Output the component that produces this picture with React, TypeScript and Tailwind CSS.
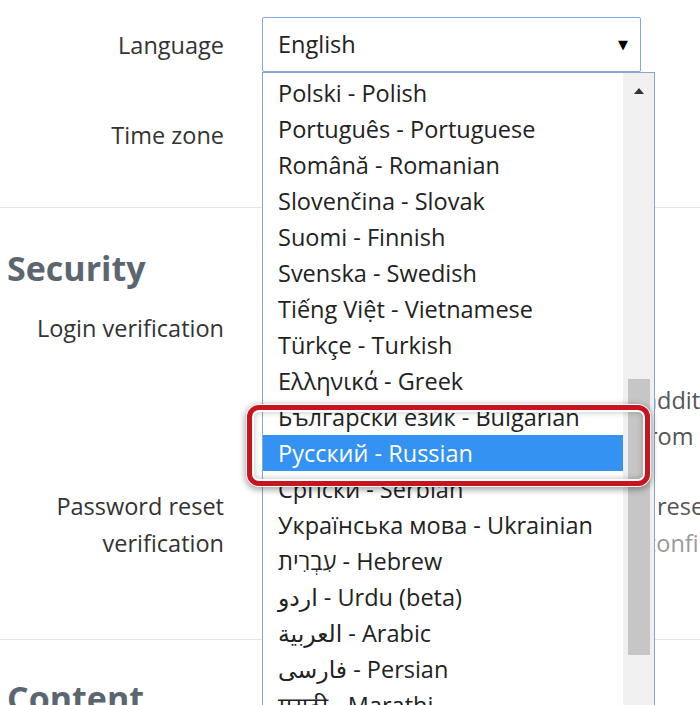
import React from 'react';

const languages = [
  'Polski - Polish',
  'Português - Portuguese',
  'Română - Romanian',
  'Slovenčina - Slovak',
  'Suomi - Finnish',
  'Svenska - Swedish',
  'Tiếng Việt - Vietnamese',
  'Türkçe - Turkish',
  'Ελληνικά - Greek',
  'Български език - Bulgarian',
  'Русский - Russian',
  'Српски - Serbian',
  'Українська мова - Ukrainian',
  'עִבְרִית - Hebrew',
  'اردو - Urdu (beta)',
  'العربية - Arabic',
  'فارسی - Persian',
  'मराठी - Marathi',
];

const font = { fontFamily: '"Open Sans", "DejaVu Sans", sans-serif' };

const Label = ({ children }: { children: React.ReactNode }) => (
  <div className="w-[224px] shrink-0 text-right text-[#333]">{children}</div>
);

export default function App() {
  return (
    <div
      className="relative w-[700px] h-[705px] overflow-hidden bg-white text-[23.5px]"
      style={font}
    >
      {/* Preferences */}
      <div className="h-[208px] border-b border-[#e6e6e6]">
        <div className="flex items-center h-[92px]">
          <Label>Language</Label>
          <div className="ml-[38px] w-[379px] h-[55px] -mt-[3px] border border-[#7fa9e0] rounded-[2px] flex items-center justify-between pl-[15px] pr-[12px] text-[#222]">
            <span>English</span>
            <span className="text-[13px] text-black">▼</span>
          </div>
        </div>
        <div className="flex items-center h-[88px]">
          <Label>Time zone</Label>
        </div>
      </div>

      {/* Security */}
      <div className="h-[432px] border-b border-[#e6e6e6] pt-[40px]">
        <h2 className="pl-[7px] h-[40px] leading-[40px] text-[34px] font-bold text-[#5c6670]">
          Security
        </h2>
        <div className="flex mt-[22px] leading-[36px]">
          <Label>Login verification</Label>
          <div className="ml-[38px] whitespace-nowrap text-[#555]">
            <div className="h-[72px]" />
            <div className="pl-[382px]">additional information</div>
            <div className="pl-[378px]">from being compromised.</div>
          </div>
        </div>
        <div className="flex mt-[34px] leading-[37px]">
          <Label>
            Password reset
            <br />
            verification
          </Label>
          <div className="ml-[38px] whitespace-nowrap">
            <div className="pl-[395px] text-[#555]">reset my password</div>
            <div className="pl-[383px] text-[#999]">confirm your identity</div>
          </div>
        </div>
      </div>

      {/* Content */}
      <div className="pt-[38px]">
        <h2 className="pl-[7px] h-[40px] leading-[40px] text-[34px] font-bold text-[#5c6670]">
          Content
        </h2>
      </div>

      {/* Open language list */}
      <div className="absolute left-[262px] top-[72px] w-[393px] h-[660px] bg-white border border-[#8fa5c4] flex">
        <div className="flex-1 pt-[2px]">
          {languages.map((l) => (
            <div
              key={l}
              className={
                l.startsWith('Русский')
                  ? 'h-[36px] leading-[36px] pl-[15px] whitespace-nowrap bg-[#3392f2] text-white'
                  : 'h-[36px] leading-[36px] pl-[15px] whitespace-nowrap text-[#222]'
              }
            >
              {l}
            </div>
          ))}
        </div>
        <div className="w-[31px] bg-[#f0f0f0] flex flex-col items-center">
          <svg width="12" height="8" viewBox="0 0 12 8" className="mt-[14px]">
            <polygon points="6,1 11,7 1,7" fill="#333" />
          </svg>
          <div className="mt-[284px] w-[22px] h-[276px] bg-[#c6c6c6]" />
        </div>
      </div>

      {/* Highlight frame */}
      <div className="absolute left-[247px] top-[405px] w-[403px] h-[81px] rounded-[12px] border-[5px] border-[#c8141e] shadow-[0_0_0_1px_#ffffff,0_2px_6px_2px_rgba(0,0,0,0.35),inset_0_0_0_2px_#ffffff,inset_0_0_6px_2px_rgba(0,0,0,0.25)]" />
    </div>
  );
}
